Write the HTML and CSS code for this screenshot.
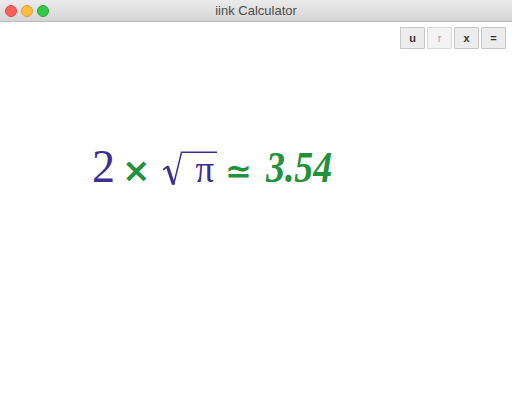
FILE: index.html
```html
<!DOCTYPE html>
<html>
<head>
<meta charset="utf-8">
<link rel="stylesheet" href="styles.css">
</head>
<body>
<div class="window">
  <div class="titlebar">
    <div class="lights">
      <span class="light red"></span>
      <span class="light yellow"></span>
      <span class="light green"></span>
    </div>
    <div class="title">iink Calculator</div>
  </div>
  <div class="toolbar">
    <button class="btn">u</button>
    <button class="btn disabled">r</button>
    <button class="btn">x</button>
    <button class="btn">=</button>
  </div>
  <div class="math">
    <span class="ink num">2</span>
    <span class="op times">×</span>
    <span class="ink sqrt"><svg class="radical" width="56" height="37" viewBox="0 0 56 37"><path d="M0.5 19.5 L4.5 16.5" stroke="#3d2f8f" stroke-width="1.6" fill="none" stroke-linecap="round"/><path d="M4.5 16.5 L10.5 34.5" stroke="#3d2f8f" stroke-width="3.2" fill="none"/><path d="M10.5 35 L18.5 2.2 L54 2.2" stroke="#3d2f8f" stroke-width="1.5" fill="none" stroke-linejoin="miter"/></svg><span class="radicand">π</span></span>
    <span class="op approx">≃</span>
    <span class="result">3.54</span>
  </div>
</div>
</body>
</html>
```
FILE: styles.css
```css
html, body {
  margin: 0;
  padding: 0;
  background: #ffffff;
}
.window {
  width: 512px;
  height: 402px;
  display: flex;
  flex-direction: column;
  font-family: "Liberation Sans", Arial, sans-serif;
}
.titlebar {
  height: 22px;
  flex: none;
  background: linear-gradient(#ebebeb, #d5d5d5);
  border-bottom: 1px solid #b9b9b9;
  box-sizing: border-box;
  display: flex;
  align-items: center;
  position: relative;
}
.lights {
  display: flex;
  gap: 4px;
  padding-left: 5px;
}
.light {
  width: 12px;
  height: 12px;
  border-radius: 50%;
  box-sizing: border-box;
}
.light.red { background: #fc605c; border: 1px solid #e14942; }
.light.yellow { background: #fdbc40; border: 1px solid #dea236; }
.light.green { background: #34c84a; border: 1px solid #27aa35; }
.title {
  position: absolute;
  left: 0;
  right: 0;
  text-align: center;
  font-size: 13px;
  color: #4d4d4d;
}
.toolbar {
  display: flex;
  justify-content: flex-end;
  gap: 2px;
  padding: 5px 6px 0 0;
}
.btn {
  width: 25px;
  height: 22px;
  margin: 0;
  padding: 0;
  border: 1px solid #c6c6c6;
  background: #ececec;
  font-family: "Liberation Sans", Arial, sans-serif;
  font-size: 11px;
  font-weight: bold;
  color: #333333;
  border-radius: 1px;
}
.btn.disabled {
  color: #a8a8a8;
  font-weight: normal;
  background: #f3f3f3;
  border-color: #d9d9d9;
}
.math {
  display: flex;
  align-items: baseline;
  padding: 95px 0 0 92px;
  font-family: "Liberation Serif", "Times New Roman", serif;
  font-size: 46px;
  line-height: 1;
}
.ink {
  color: #3d2f8f;
}
.op {
  color: #22913a;
  font-family: "DejaVu Sans", sans-serif;
  font-weight: bold;
}
.times {
  margin-left: 7px;
  font-size: 34px;
}
.sqrt {
  margin-left: 12px;
  display: inline-block;
  white-space: nowrap;
}
.radical {
  vertical-align: -5px;
}
.radicand {
  margin-left: -23px;
  font-size: 37px;
}
.approx {
  margin-left: 11px;
  font-size: 32px;
}
.result {
  margin-left: 14px;
  color: #22913a;
  font-weight: bold;
  font-style: italic;
  font-size: 45px;
  display: inline-block;
  transform: scaleX(0.84);
  transform-origin: left bottom;
}
```
